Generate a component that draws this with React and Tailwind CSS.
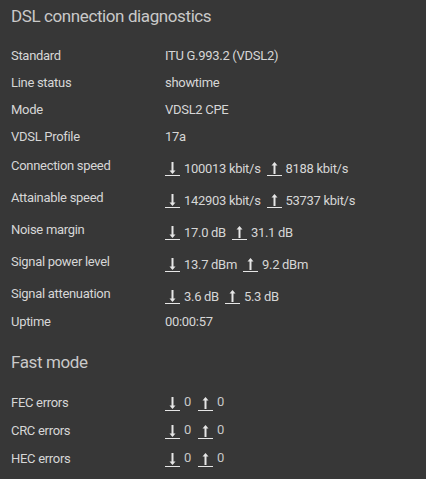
import React from "react";

const Down = () => (
  <svg width="15" height="16" viewBox="0 0 15 16" className="shrink-0">
    <rect x="6.5" y="2" width="2" height="9" fill="#e6e6e6" />
    <path d="M4.5 10.5 L10.5 10.5 L7.5 14 Z" fill="#e6e6e6" />
    <rect x="0" y="15" width="15" height="1.3" fill="#e6e6e6" />
  </svg>
);

const Up = () => (
  <svg width="15" height="16" viewBox="0 0 15 16" className="shrink-0">
    <rect x="6.5" y="5" width="2" height="9" fill="#e6e6e6" />
    <path d="M4.5 5.5 L10.5 5.5 L7.5 2 Z" fill="#e6e6e6" />
    <rect x="0" y="15" width="15" height="1.3" fill="#e6e6e6" />
  </svg>
);

const Plain = ({ label, value, className = "" }) => (
  <div className={"flex h-[27px] items-center " + className}>
    <div className="w-[154px] shrink-0">{label}</div>
    <div>{value}</div>
  </div>
);

const Dual = ({ label, down, up }) => (
  <div className="flex h-[32px] items-center">
    <div className="w-[154px] shrink-0">{label}</div>
    <div className="flex items-end mt-[3px]">
      <Down />
      <span className="ml-[4px] mr-[6px] leading-[14px]">{down}</span>
      <Up />
      <span className="ml-[4px] leading-[14px]">{up}</span>
    </div>
  </div>
);

const Err = ({ label }) => (
  <div className="flex h-[28px] items-center">
    <div className="w-[154px] shrink-0">{label}</div>
    <div className="flex items-center">
      <Down />
      <span className="ml-[4px] mr-[7px] mb-[3px] text-[#c8c8c8]">0</span>
      <Up />
      <span className="ml-[4px] mb-[3px] text-[#c8c8c8]">0</span>
    </div>
  </div>
);

export default function App() {
  return (
    <div
      className="w-full h-[479px] bg-[#373737] px-[11px] pt-[4px] text-[13px] tracking-[-0.3px] text-[#d6d6d6] overflow-hidden"
      style={{ fontFamily: "Roboto, 'Liberation Sans', sans-serif" }}
    >
      <h2 className="text-[17px] leading-[24px] tracking-[-0.4px] text-[#c9c9c9] font-normal">DSL connection diagnostics</h2>
      <div className="mt-[14px]">
        <Plain label="Standard" value="ITU G.993.2 (VDSL2)" />
        <Plain label="Line status" value="showtime" />
        <Plain label="Mode" value="VDSL2 CPE" />
        <Plain label="VDSL Profile" value="17a" />
        <Dual label="Connection speed" down="100013 kbit/s" up="8188 kbit/s" />
        <Dual label="Attainable speed" down="142903 kbit/s" up="53737 kbit/s" />
        <Dual label="Noise margin" down="17.0 dB" up="31.1 dB" />
        <Dual label="Signal power level" down="13.7 dBm" up="9.2 dBm" />
        <Dual label="Signal attenuation" down="3.6 dB" up="5.3 dB" />
        <Plain label="Uptime" value="00:00:57" className="-mt-[2px]" />
      </div>
      <h2 className="mt-[15px] text-[17px] leading-[24px] tracking-[-0.4px] text-[#c9c9c9] font-normal">Fast mode</h2>
      <div className="mt-[15px]">
        <Err label="FEC errors" />
        <Err label="CRC errors" />
        <Err label="HEC errors" />
      </div>
    </div>
  );
}
